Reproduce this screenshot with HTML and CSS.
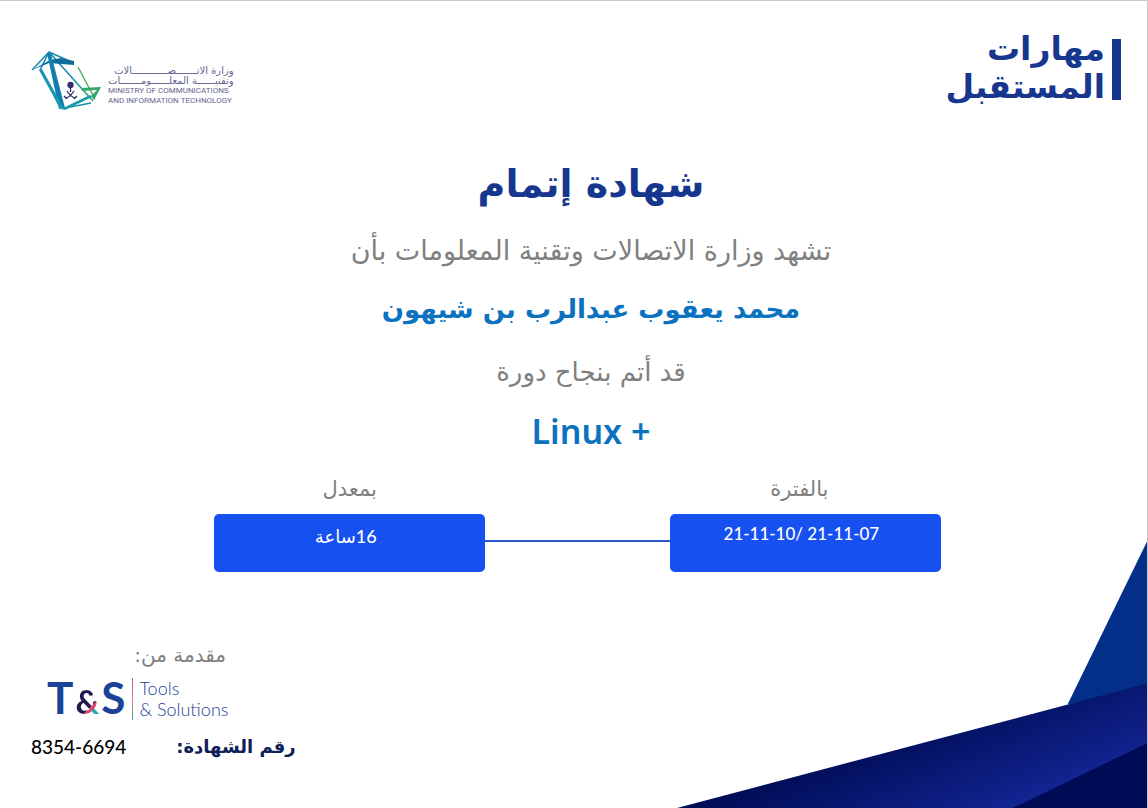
FILE: index.html
```html
<!DOCTYPE html>
<html lang="ar">
<head>
<meta charset="utf-8">
<title>شهادة إتمام</title>
<link rel="stylesheet" href="styles.css">
</head>
<body>
<div class="certificate">
  <svg class="corner" viewBox="0 0 472 268" aria-hidden="true">
    <defs>
      <linearGradient id="band" gradientUnits="userSpaceOnUse" x1="220" y1="185" x2="270" y2="310">
        <stop offset="0" stop-color="#000c55"/>
        <stop offset="1" stop-color="#14289a"/>
      </linearGradient>
    </defs>
    <path d="M472 0V150L392 164Z" fill="#032f88"/>
    <path d="M0 268L472 143V268Z" fill="url(#band)"/>
    <path d="M337 268L472 203V268Z" fill="#000b55"/>
  </svg>

  <header class="header">
    <div class="ministry">
      <svg class="ministry-mark" viewBox="0 0 72 62" aria-hidden="true">
        <defs>
          <linearGradient id="mark" x1="0" y1="0" x2="1" y2="1">
            <stop offset="0" stop-color="#1685b4"/>
            <stop offset=".55" stop-color="#1493ae"/>
            <stop offset="1" stop-color="#3fa75b"/>
          </linearGradient>
        </defs>
        <g fill="none" stroke="url(#mark)" stroke-width="1.6" stroke-linejoin="round">
          <path d="M1 21L18 3L43 14"/>
          <path d="M18 3L9 21L29 57"/>
          <path d="M18 3L52 41L62 52"/>
          <path d="M60 54L34 59"/>
        </g>
        <path d="M47 18L64 50" fill="none" stroke="#3fa75b" stroke-width="1.3"/>
        <path d="M1 21L19 11L30 9L43 12V16L18 14Z" fill="#116c9e"/>
        <path d="M16 4L20 5L34 59L28 60Z" fill="#147fac"/>
        <path d="M9 21L11 20L32 58L29 60Z" fill="#1798b3"/>
        <path d="M50 39L70 38L63 51L60 47L66 41L51 42Z" fill="#37a66b"/>
        <path d="M30 60L59 46L61 48L34 61Z" fill="#159bab"/>
        <g stroke="#332e6c" fill="none" stroke-width="1.3">
          <circle cx="39.500" cy="36" r="2.500" fill="#332e6c"/>
          <path d="M39.500 38V43M35 49Q39 48 43 42M44 49Q40 48 36 42M33 47L36 50M46 47L43 50"/>
        </g>
      </svg>
      <div class="ministry-name">
        <p class="ministry-ar" dir="rtl">وزارة الاتـــــــصــــــــــــالات</p>
        <p class="ministry-ar" dir="rtl">وتقنيــــــة المعلــــــومـــــــات</p>
        <p class="ministry-en" lang="en">MINISTRY OF COMMUNICATIONS</p>
        <p class="ministry-en" lang="en">AND INFORMATION TECHNOLOGY</p>
      </div>
    </div>
    <div class="skills" dir="rtl">
      <div class="skills-bar"></div>
      <div>
        <p>مهارات</p>
        <p>المستقبل</p>
      </div>
    </div>
  </header>

  <main class="main">
    <div class="statement" dir="rtl">
      <h1 class="title">شهادة إتمام</h1>
      <p class="lead">تشهد وزارة الاتصالات وتقنية المعلومات بأن</p>
      <h2 class="name">محمد يعقوب عبدالرب بن شيهون</h2>
      <p class="sublead">قد أتم بنجاح دورة</p>
      <p class="course" dir="ltr" lang="en">Linux +</p>
    </div>
    <div class="facts">
      <section class="fact">
        <h3 class="fact-label" dir="rtl">بمعدل</h3>
        <p class="fact-value hours" dir="rtl">16ساعة</p>
      </section>
      <div class="connector"></div>
      <section class="fact">
        <h3 class="fact-label period" dir="rtl">بالفترة</h3>
        <p class="fact-value">21-11-10/ 21-11-07</p>
      </section>
    </div>
  </main>

  <footer class="footer">
    <p class="provided" dir="rtl">مقدمة من:</p>
    <div class="provider" lang="en">
      <span class="provider-mark">T<span class="ampersand">&amp;</span>S</span>
      <span class="provider-name">Tools<br>&amp; Solutions</span>
    </div>
    <div class="serial">
      <span class="serial-number">8354-6694</span>
      <span class="serial-label" dir="rtl">رقم الشهادة:</span>
    </div>
  </footer>
</div>
</body>
</html>
```
FILE: styles.css
```css
* { box-sizing: border-box; }
body {
  margin: 0;
  background: #fff;
  font-family: "DejaVu Sans", sans-serif;
}
h1, h2, h3, p { margin: 0; }
.certificate {
  position: relative;
  display: flex;
  flex-direction: column;
  min-height: 100vh;
  overflow: hidden;
  border-top: 1px solid #c8c8c8;
  border-right: 1px solid #c8c8c8;
}
.corner {
  position: absolute;
  right: 0;
  bottom: 0;
  width: 41%;
}
.header {
  display: flex;
  justify-content: space-between;
  padding: 29px 26px 0 31px;
}
.ministry {
  display: flex;
  gap: 5px;
  padding-top: 19px;
}
.ministry-mark { width: 72px; height: 62px; }
.ministry-name {
  padding-top: 17px;
  color: #64648f;
  white-space: nowrap;
}
.ministry-ar { font-size: 10px; line-height: 10px; }
.ministry-en {
  font-family: Roboto, sans-serif;
  font-size: 8px;
  line-height: 10px;
}
.skills {
  display: flex;
  align-self: flex-start;
  gap: 7px;
  color: #17378f;
  font-size: 33px;
  font-weight: bold;
  line-height: 38px;
}
.skills-bar {
  width: 9px;
  margin: 9px 0 6px;
  background: #17378f;
}
.main { padding-top: 48px; }
.statement {
  display: flex;
  flex-direction: column;
  align-items: center;
  padding-left: 35px;
  text-align: center;
}
.title { margin-bottom: 12px; color: #17378f; font-size: 38px; line-height: 50px; }
.lead { color: #808080; font-size: 27px; line-height: 60px; }
.name { color: #0b72c0; font-size: 26px; line-height: 56px; }
.sublead { color: #808080; font-size: 26px; line-height: 70px; }
.course {
  color: #0b72c0;
  font-family: "Noto Sans", sans-serif;
  font-size: 34px;
  font-weight: 600;
  line-height: 48px;
}
.facts {
  display: grid;
  grid-template-columns: 270fr 185fr 270fr;
  align-items: end;
  padding: 16px 18% 0 18.7%;
}
.fact { text-align: center; }
.fact-label {
  margin-bottom: 7px;
  color: #808080;
  font-size: 21px;
  font-weight: normal;
  line-height: 36px;
}
.period { padding-right: 12px; }
.fact-value {
  height: 58px;
  padding-right: 8px;
  border-radius: 5px;
  background: #1650f0;
  color: #fff;
  font-family: Lato, "DejaVu Sans", sans-serif;
  font-size: 17px;
  font-weight: 500;
  line-height: 40px;
}
.hours { font-size: 18px; line-height: 44px; }
.connector { height: 2px; margin-bottom: 30px; background: #2857c8; }
.footer { margin-top: auto; padding: 0 31px 47px; }
.provided {
  width: 195px;
  color: #808080;
  font-size: 20px;
  line-height: 36px;
  text-align: start;
}
.provider {
  display: flex;
  align-items: center;
  gap: 7px;
  padding-left: 16px;
  color: #1d429a;
  font-family: Lato, sans-serif;
}
.provider-mark { font-size: 44px; font-weight: bold; line-height: 48px; }
.ampersand {
  margin: 0 2px;
  background: linear-gradient(135deg, #25164f 64%, #e0466b 65% 72%, #28a9a7 73%);
  background-clip: text;
  color: transparent;
  font-size: 33px;
}
.provider-name {
  padding-left: 6px;
  border-left: 1px solid;
  border-image: linear-gradient(#c8507c, #d9829b 55%, #28a9a7) 1;
  font-size: 18px;
  font-weight: 300;
  line-height: 21px;
}
.serial {
  display: flex;
  align-items: center;
  gap: 50px;
  padding-top: 8px;
  line-height: 28px;
}
.serial-number { color: #000; font-family: Lato, sans-serif; font-size: 19px; font-weight: 500; }
.serial-label { color: #0d2057; font-size: 18px; font-weight: bold; }
```
